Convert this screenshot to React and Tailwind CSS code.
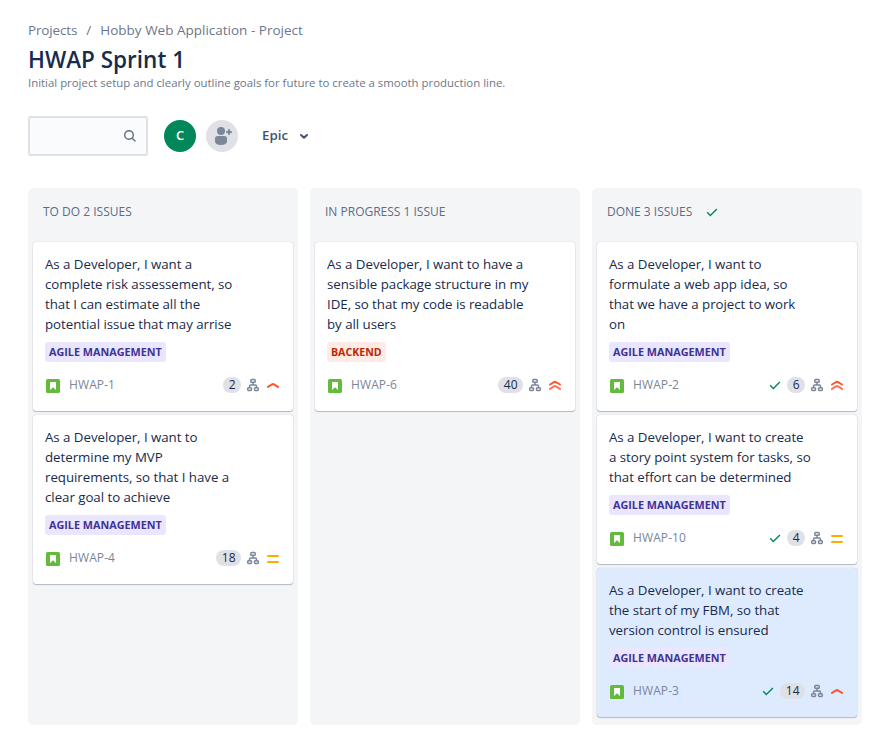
const HIGH = 'high';
const HIGHEST = 'highest';
const MEDIUM = 'medium';

const columns = [
  {
    title: 'TO DO 2 ISSUES',
    cards: [
      {
        id: 'HWAP-1',
        points: 2,
        priority: HIGH,
        epic: 'AGILE MANAGEMENT',
        lines: ['As a Developer, I want a', 'complete risk assessement, so', 'that I can estimate all the', 'potential issue that may arrise'],
      },
      {
        id: 'HWAP-4',
        points: 18,
        priority: MEDIUM,
        epic: 'AGILE MANAGEMENT',
        lines: ['As a Developer, I want to', 'determine my MVP', 'requirements, so that I have a', 'clear goal to achieve'],
      },
    ],
  },
  {
    title: 'IN PROGRESS 1 ISSUE',
    cards: [
      {
        id: 'HWAP-6',
        points: 40,
        priority: HIGHEST,
        epic: 'BACKEND',
        lines: ['As a Developer, I want to have a', 'sensible package structure in my', 'IDE, so that my code is readable', 'by all users'],
      },
    ],
  },
  {
    title: 'DONE 3 ISSUES',
    done: true,
    cards: [
      {
        id: 'HWAP-2',
        points: 6,
        priority: HIGHEST,
        epic: 'AGILE MANAGEMENT',
        lines: ['As a Developer, I want to', 'formulate a web app idea, so', 'that we have a project to work', 'on'],
      },
      {
        id: 'HWAP-10',
        points: 4,
        priority: MEDIUM,
        epic: 'AGILE MANAGEMENT',
        lines: ['As a Developer, I want to create', 'a story point system for tasks, so', 'that effort can be determined'],
      },
      {
        id: 'HWAP-3',
        points: 14,
        priority: HIGH,
        epic: 'AGILE MANAGEMENT',
        selected: true,
        lines: ['As a Developer, I want to create', 'the start of my FBM, so that', 'version control is ensured'],
      },
    ],
  },
];

function Check() {
  return (
    <svg className="size-4 shrink-0" viewBox="0 0 16 16" fill="none" stroke="#00875A" strokeWidth="1.4">
      <path d="M3.2 8.3 6.3 11.4 12.9 4.9" />
    </svg>
  );
}

function StoryIcon() {
  return (
    <svg className="size-3.5 shrink-0" viewBox="0 0 14 14">
      <rect width="14" height="14" rx="1.6" fill="#63BA3C" />
      <path d="M4 3.6Q4 3 4.6 3H9.4Q10 3 10 3.6V11L7 8.2 4 11Z" fill="#fff" />
    </svg>
  );
}

function SubtaskIcon() {
  return (
    <svg className="size-4 shrink-0" viewBox="0 0 16 16" fill="none" stroke="#7A869A" strokeWidth="1.5">
      <rect x="5.8" y="2.6" width="4.4" height="2.6" rx="0.8" />
      <rect x="2.7" y="10.8" width="3.8" height="2.6" rx="0.8" />
      <rect x="9.5" y="10.8" width="3.8" height="2.6" rx="0.8" />
      <path d="M8 5.2v2.7M4.6 10.8V8.8q0-.9.9-.9h5q.9 0 .9.9v2" />
    </svg>
  );
}

function PriorityIcon({ level }) {
  return (
    <svg className="size-4 shrink-0" viewBox="0 0 16 16" fill="none" strokeWidth="2" strokeLinecap="round" strokeLinejoin="round">
      {level === HIGH && <path d="M3 9.9 7.5 7.2Q8 6.9 8.5 7.2L13 9.9" stroke="#FF5630" />}
      {level === HIGHEST && (
        <>
          <path d="M3 7.5 7.5 4.8Q8 4.5 8.5 4.8L13 7.5" stroke="#FF5630" />
          <path d="M3 11.9 7.5 9.2Q8 8.9 8.5 9.2L13 11.9" stroke="#FF7452" />
        </>
      )}
      {level === MEDIUM && <path d="M3 5H13M3 11H13" transform="translate(0 1)" stroke="#FFAB00" />}
    </svg>
  );
}

function Card({ card, done }) {
  return (
    <article
      className={`rounded-[3px] px-3 pt-3 pb-[18px] shadow-[0_1px_1px_rgba(9,30,66,0.25),0_0_1px_rgba(9,30,66,0.31)] ${card.selected ? 'bg-[#DEEBFF]' : 'bg-white'}`}
    >
      <div className="text-[13.3px] leading-5 tracking-[-0.04px] text-[#172B4D]">
        {card.lines.map((line) => (
          <p key={line} className="whitespace-nowrap">{line}</p>
        ))}
      </div>
      <div className="mt-2 flex">
        <span
          className={`h-5 rounded-[3px] px-1 leading-5 font-bold whitespace-nowrap ${card.epic === 'BACKEND' ? 'bg-[#FFEBE6] text-[10.6px] text-[#BF2600]' : 'bg-[#EAE6FF] text-[10.8px] text-[#403294]'}`}
        >
          {card.epic}
        </span>
      </div>
      <div className="mt-[15px] flex h-4 items-center gap-1">
        <div className="flex flex-1 items-center gap-[9px] pt-px pl-px">
          <StoryIcon />
          <span className="-mt-0.5 text-[12px] leading-4 font-medium tracking-[0.1px] text-[#7A869A]">{card.id}</span>
        </div>
        {done && <Check />}
        <span className="h-4 rounded-full bg-[#DFE1E6] px-[5.5px] text-[12px] leading-4 text-[#172B4D]">{card.points}</span>
        <SubtaskIcon />
        <PriorityIcon level={card.priority} />
      </div>
    </article>
  );
}

export default function App() {
  return (
    <div className="h-[748px] w-[874px] overflow-hidden bg-white pt-5 pl-7 font-['Open_Sans',sans-serif]">
      <nav className="flex h-5 items-center text-[13.5px] leading-5 text-[#6B778C]">
        <span className="tracking-[-0.15px]">Projects</span>
        <span className="w-[23px] text-center">/</span>
        <span>Hobby Web Application - Project</span>
      </nav>
      <h1 className="mt-1.5 text-[22.5px] leading-7 font-semibold text-[#172B4D]">HWAP Sprint 1</h1>
      <p className="mt-px text-[11.4px] leading-4 text-[#6B778C]">
        Initial project setup and clearly outline goals for future to create a smooth production line.
      </p>

      <div className="mt-[25px] flex h-10 items-center">
        <div className="flex h-10 w-30 items-center justify-end rounded-[3px] border-2 border-[#DFE1E6] bg-[#FAFBFC] pr-2">
          <svg className="size-4" viewBox="0 0 16 16" fill="none" stroke="#5E6C84" strokeWidth="1.4" strokeLinecap="round">
            <circle cx="7" cy="7" r="4.3" />
            <path d="m10.2 10.2 2.8 2.8" />
          </svg>
        </div>
        <div className="ml-4 flex size-8 items-center justify-center rounded-full bg-[#00875A] text-[13px] font-semibold text-white">C</div>
        <div className="ml-2.5 flex size-8 items-center justify-center rounded-full bg-[#DFE1E6]">
          <svg className="size-8" viewBox="0 0 32 32" fill="#7A869A">
            <circle cx="15" cy="11" r="4" />
            <path d="M9 18.8Q9 16 11.8 16H18.2Q21 16 21 18.8V21Q21 25 15 25T9 21Z" />
            <path d="M23 9.2V14.8M20.2 12H25.8" stroke="#7A869A" strokeWidth="2" />
          </svg>
        </div>
        <span className="ml-6 text-[13.3px] font-semibold text-[#42526E]">Epic</span>
        <svg className="ml-2 size-4" viewBox="0 0 16 16" fill="none" stroke="#42526E" strokeWidth="2" strokeLinecap="round" strokeLinejoin="round">
          <path d="m5 7 3 2.8L11 7" />
        </svg>
      </div>

      <main className="mt-8 flex h-[537px] gap-3">
        {columns.map((column) => (
          <section key={column.title} className="w-[270px] shrink-0 rounded-[5px] bg-[#F4F5F7] px-[5px]">
            <header className="flex h-[54px] items-center gap-3 px-2.5 pb-1.5">
              <h2 className="text-[12px] leading-4 font-medium whitespace-nowrap text-[#5E6C84]">{column.title}</h2>
              {column.done && <Check />}
            </header>
            <div className="flex flex-col gap-1">
              {column.cards.map((card) => (
                <Card key={card.id} card={card} done={column.done} />
              ))}
            </div>
          </section>
        ))}
      </main>
    </div>
  );
}
